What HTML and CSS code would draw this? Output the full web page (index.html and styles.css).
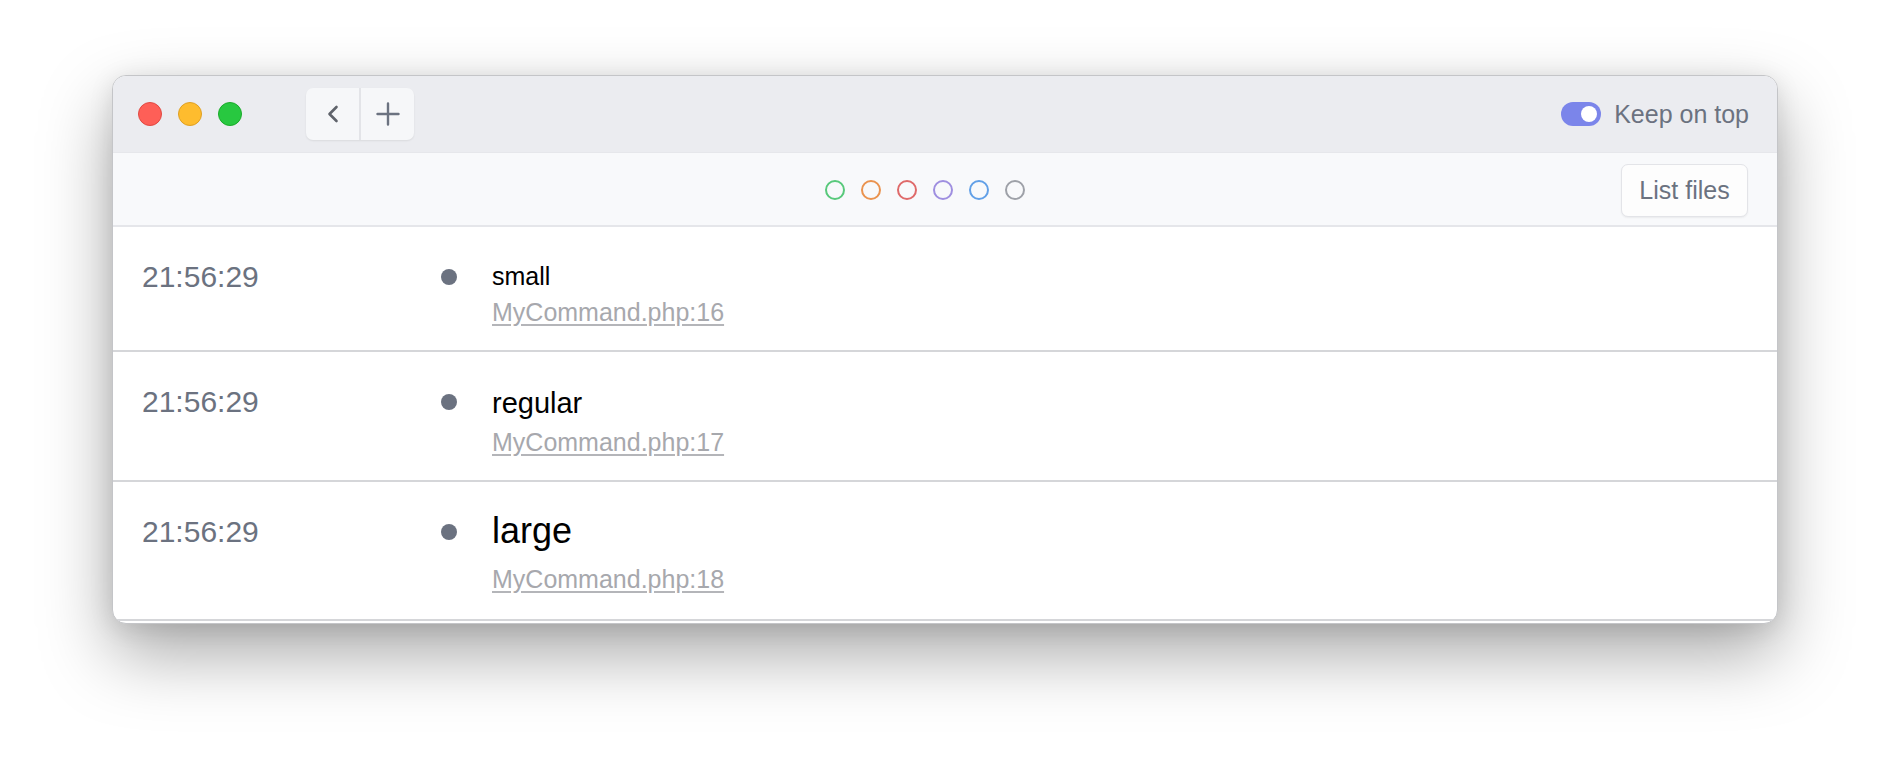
FILE: index.html
```html
<!DOCTYPE html>
<html lang="en">
<head>
<meta charset="utf-8">
<title>Ray</title>
<link rel="stylesheet" href="styles.css">
</head>
<body>
<div class="window">
  <header class="titlebar">
    <div class="lights">
      <span class="light red"></span>
      <span class="light yellow"></span>
      <span class="light green"></span>
    </div>
    <div class="nav">
      <button class="nav-btn" aria-label="Back">
        <svg width="20" height="24" viewBox="0 0 20 24"><polyline points="13.5,5 6.5,12 13.5,19" fill="none" stroke="#5f636b" stroke-width="2.6" stroke-linecap="round" stroke-linejoin="round"/></svg>
      </button>
      <span class="nav-divider"></span>
      <button class="nav-btn" aria-label="New">
        <svg width="24" height="24" viewBox="0 0 24 24"><path d="M12 1.5V22.5M1.5 12H22.5" fill="none" stroke="#6b7280" stroke-width="2.4" stroke-linecap="round"/></svg>
      </button>
    </div>
    <div class="keep">
      <span class="toggle"><span class="knob"></span></span>
      <span class="keep-label">Keep on top</span>
    </div>
  </header>
  <div class="toolbar">
    <div class="colors">
      <span class="ring green-r"></span>
      <span class="ring orange-r"></span>
      <span class="ring red-r"></span>
      <span class="ring purple-r"></span>
      <span class="ring blue-r"></span>
      <span class="ring gray-r"></span>
    </div>
    <button class="list-btn">List files</button>
  </div>
  <div class="rows">
    <div class="row">
      <div class="time">21:56:29</div>
      <div class="bullet-col"><span class="bullet"></span></div>
      <div class="content">
        <div class="msg msg-small">small</div>
        <a class="origin" href="#">MyCommand.php:16</a>
      </div>
    </div>
    <div class="row">
      <div class="time">21:56:29</div>
      <div class="bullet-col"><span class="bullet"></span></div>
      <div class="content">
        <div class="msg msg-regular">regular</div>
        <a class="origin" href="#">MyCommand.php:17</a>
      </div>
    </div>
    <div class="row row-last">
      <div class="time">21:56:29</div>
      <div class="bullet-col"><span class="bullet"></span></div>
      <div class="content">
        <div class="msg msg-large">large</div>
        <a class="origin" href="#">MyCommand.php:18</a>
      </div>
    </div>
  </div>
</div>
</body>
</html>
```

FILE: styles.css
```css
* { box-sizing: border-box; }

html, body {
  margin: 0;
  padding: 0;
  background: #ffffff;
  font-family: "Liberation Sans", Arial, sans-serif;
}

body {
  width: 1890px;
  height: 772px;
  overflow: hidden;
  padding: 75px 0 0 112px;
}

.window {
  width: 1666px;
  background: #ffffff;
  border: 1px solid #c4c5c8;
  border-radius: 14px;
  overflow: hidden;
  box-shadow: 0 30px 70px rgba(0, 0, 0, 0.34), 0 4px 24px rgba(0, 0, 0, 0.10);
}

/* Title bar */
.titlebar {
  height: 76px;
  background: #ebecf0;
  display: flex;
  align-items: center;
  padding: 0 28px 0 25px;
}

.lights {
  display: flex;
  gap: 16px;
}

.light {
  width: 24px;
  height: 24px;
  border-radius: 50%;
  display: block;
}
.light.red { background: #fe5f57; border: 1px solid #e14942; }
.light.yellow { background: #febc2e; border: 1px solid #dfa023; }
.light.green { background: #28c840; border: 1px solid #1aab29; }

.nav {
  margin-left: 64px;
  display: flex;
  align-items: stretch;
  height: 52px;
  background: #f6f7f9;
  border-radius: 7px;
  box-shadow: 0 1px 2px rgba(0, 0, 0, 0.08);
}

.nav-btn {
  width: 53px;
  border: 0;
  background: transparent;
  padding: 0;
  display: flex;
  align-items: center;
  justify-content: center;
}

.nav-divider {
  width: 2px;
  background: #e3e4e8;
}

.keep {
  margin-left: auto;
  display: flex;
  align-items: center;
  gap: 13px;
}

.toggle {
  width: 40px;
  height: 24px;
  border-radius: 12px;
  background: #7b85ea;
  display: flex;
  align-items: center;
  justify-content: flex-end;
  padding-right: 4px;
}

.knob {
  width: 16px;
  height: 16px;
  border-radius: 50%;
  background: #ffffff;
}

.keep-label {
  font-size: 25px;
  color: #6b7280;
  line-height: 30px;
}

/* Toolbar */
.toolbar {
  height: 75px;
  background: #f8f9fb;
  border-top: 1px solid #e6e7eb;
  border-bottom: 2px solid #e5e6ea;
  display: flex;
  align-items: center;
  padding: 2px 29px 0 115px;
}

.colors {
  flex: 1;
  display: flex;
  justify-content: center;
  gap: 16px;
}

.ring {
  width: 20px;
  height: 20px;
  border-radius: 50%;
  border: 2px solid;
  display: block;
}
.green-r { border-color: #58c97b; }
.orange-r { border-color: #ea934f; }
.red-r { border-color: #df6a6a; }
.purple-r { border-color: #9f8fe0; }
.blue-r { border-color: #62a0e7; }
.gray-r { border-color: #9ea1a8; }

.list-btn {
  width: 127px;
  height: 53px;
  border: 1px solid #e3e4e8;
  border-radius: 7px;
  background: #fdfdfd;
  box-shadow: 0 1px 2px rgba(0, 0, 0, 0.06);
  font-family: "Liberation Sans", Arial, sans-serif;
  font-size: 25px;
  color: #6b7280;
  padding: 0;
}

/* Rows */
.rows {
  padding-bottom: 2px;
}

.row {
  display: flex;
  align-items: flex-start;
  padding: 27px 0 20px 29px;
  border-bottom: 2px solid #d5d6d9;
}

.row-last {
  padding-bottom: 22px;
}

.time {
  width: 299px;
  font-size: 30px;
  line-height: 45px;
  color: #6b7280;
}

.bullet-col {
  width: 16px;
  height: 45px;
  display: flex;
  align-items: center;
}

.bullet {
  width: 16px;
  height: 16px;
  border-radius: 50%;
  background: #6b7280;
}

.content {
  margin-left: 35px;
  margin-top: 4px;
  display: flex;
  flex-direction: column;
  align-items: flex-start;
}

.msg {
  color: #000000;
}

.msg-small { font-size: 25px; line-height: 36px; }
.msg-regular { font-size: 29px; line-height: 41px; }
.msg-large { font-size: 36px; line-height: 35px; margin-bottom: 13px; }

.origin {
  font-size: 25px;
  line-height: 36px;
  color: #a7a8ad;
  text-decoration: underline;
  text-decoration-color: #b4b5b9;
  text-underline-offset: 3px;
}
```
